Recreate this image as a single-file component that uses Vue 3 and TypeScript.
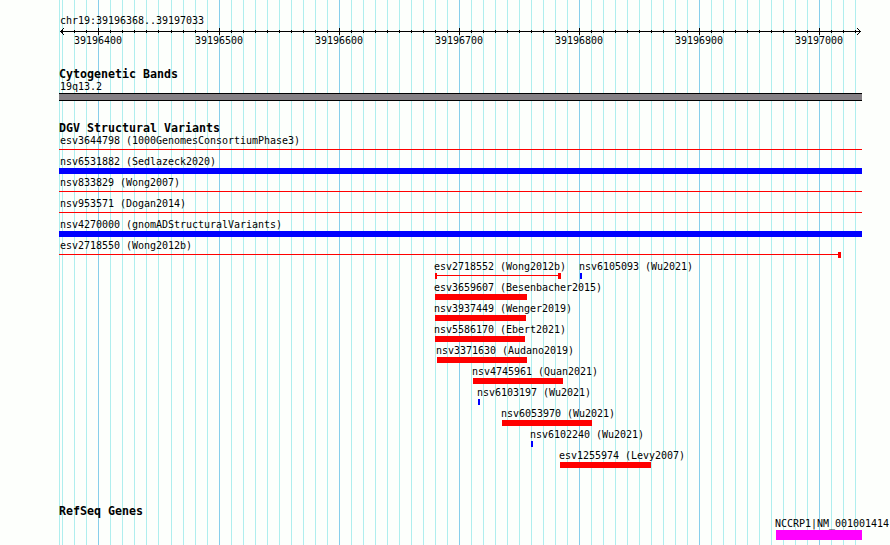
<script setup lang="ts">
interface Feature {
  name: string
  start: number
  end: number
  kind: 'gain' | 'loss' | 'line'
  cap?: number
  startCap?: boolean
  labelAt?: number
}

const viewStart = 59
const viewEnd = 862
const base = 39196400
const toX = (pos: number): number => Math.round(98.435 + (pos - base) * 1.2012)

const gridLines = Array.from({ length: 67 }, (_, i) => 39196370 + i * 10).map((pos) => ({
  pos,
  x: toX(pos) + 0.5,
  major: pos % 100 === 0,
}))
const majors = gridLines.filter((g) => g.major)

const full = (name: string, kind: Feature['kind']): Feature[] => [
  { name, kind, start: viewStart, end: viewEnd, labelAt: 60 },
]
const loss = (name: string, start: number, end: number): Feature[] => [{ name, kind: 'loss', start, end }]
const gain = (name: string, start: number): Feature[] => [{ name, kind: 'gain', start, end: start + 2 }]

const rows: Feature[][] = [
  full('esv3644798 (1000GenomesConsortiumPhase3)', 'line'),
  full('nsv6531882 (Sedlazeck2020)', 'gain'),
  full('nsv833829 (Wong2007)', 'line'),
  full('nsv953571 (Dogan2014)', 'line'),
  full('nsv4270000 (gnomADStructuralVariants)', 'gain'),
  [{ name: 'esv2718550 (Wong2012b)', kind: 'line', start: viewStart, end: 841, cap: 3, labelAt: 60 }],
  [
    { name: 'esv2718552 (Wong2012b)', kind: 'line', start: 435, end: 561, cap: 3, startCap: true },
    { name: 'nsv6105093 (Wu2021)', kind: 'gain', start: 580, end: 582 },
  ],
  loss('esv3659607 (Besenbacher2015)', 435, 527),
  loss('nsv3937449 (Wenger2019)', 435, 526),
  loss('nsv5586170 (Ebert2021)', 435, 525),
  loss('nsv3371630 (Audano2019)', 437, 527),
  loss('nsv4745961 (Quan2021)', 473, 563),
  gain('nsv6103197 (Wu2021)', 478),
  loss('nsv6053970 (Wu2021)', 502, 592),
  gain('nsv6102240 (Wu2021)', 531),
  loss('esv1255974 (Levy2007)', 560, 651),
]

// Each feature occupies zero layout width, so its margin is the gap to the previous feature's start.
const offset = (row: Feature[], i: number): string =>
  `${row[i].start - (i === 0 ? viewStart : row[i - 1].start)}px`
const labelShift = (f: Feature): string => `${(f.labelAt ?? f.start - 1) - f.start}px`
</script>

<template>
  <main class="browser">
    <svg class="grid" width="890" height="545" shape-rendering="crispEdges" aria-hidden="true">
      <line class="minor" x1="59.5" x2="59.5" y1="0" y2="545" />
      <line
        v-for="g in gridLines"
        :key="g.pos"
        :class="g.major ? 'major' : 'minor'"
        :x1="g.x"
        :x2="g.x"
        y1="0"
        y2="545"
      />
    </svg>

    <section class="ruler">
      <div class="label">chr19:39196368..39197033</div>
      <svg class="axis" width="803" height="8" viewBox="59 27 803 8" shape-rendering="crispEdges">
        <path class="stroke" d="M60 31.5H861" />
        <path
          v-for="g in gridLines"
          :key="g.pos"
          class="stroke"
          :d="g.major ? `M${g.x} 28V35` : `M${g.x} 30V33`"
        />
        <path
          class="head"
          d="M60 31h1v1h-1zM61 30h1v1h-1zM61 32h1v1h-1zM62 29h1v1h-1zM62 33h1v1h-1zM63 28h1v1h-1zM63 34h1v1h-1z"
        />
        <path
          class="head"
          d="M860 31h1v1h-1zM859 30h1v1h-1zM859 32h1v1h-1zM858 29h1v1h-1zM858 33h1v1h-1zM857 28h1v1h-1zM857 34h1v1h-1z"
        />
      </svg>
      <div class="ticks">
        <span v-for="(g, i) in majors" :key="g.pos" class="tick" :style="{ marginLeft: `${g.x - 0.5 - (i ? majors[i - 1].x - 0.5 : viewStart)}px` }">
          <span class="tick-text">{{ g.pos }}</span>
        </span>
      </div>
    </section>

    <section class="bands">
      <h2>Cytogenetic Bands</h2>
      <div class="label">19q13.2</div>
      <div class="band"></div>
    </section>

    <section class="variants">
      <h2>DGV Structural Variants</h2>
      <div v-for="(row, r) in rows" :key="r" class="row">
        <div v-for="(f, i) in row" :key="f.name" class="feature" :style="{ marginLeft: offset(row, i) }">
          <div class="label" :style="{ marginLeft: labelShift(f) }">{{ f.name }}</div>
          <div :class="['glyph', f.kind]" :style="{ width: `${f.end - f.start}px` }">
            <i v-if="f.startCap" class="cap first"></i>
            <i v-if="f.cap" class="cap last"></i>
          </div>
        </div>
      </div>
    </section>

    <section class="genes">
      <h2>RefSeq Genes</h2>
      <div class="gene">
        <div class="label">NCCRP1|NM_001001414</div>
        <div class="gene-bar"></div>
      </div>
    </section>
  </main>
</template>

<style>
body {
  background: #fdfffc;
}
</style>

<style scoped>
.browser {
  position: relative;
  box-sizing: border-box;
  width: 890px;
  height: 545px;
  padding: 15px 0 0 59px;
  overflow: hidden;
  background: #fdfffc;
  color: #000;
  font-family: "DejaVu Sans Mono", "Liberation Mono", monospace;
  font-size: 10px;
  line-height: 12px;
  letter-spacing: -0.02px;
}
.grid {
  position: absolute;
  left: 0;
  top: 0;
}
.minor {
  stroke: #afeeee;
}
.major {
  stroke: #87ceeb;
}
section {
  position: relative;
}
.label {
  white-space: pre;
  height: 12px;
}
.ruler {
  height: 53px;
}
.ruler > .label,
.bands > .label {
  margin-left: 1px;
}
.axis {
  display: block;
}
.stroke {
  fill: none;
  stroke: #000;
}
.head {
  fill: #000;
}
.ticks {
  display: flex;
}
.tick {
  display: flex;
  justify-content: center;
  width: 0;
}
.tick-text {
  flex: none;
}
h2 {
  margin: 0;
  height: 13px;
  font-size: 11.63px;
  line-height: 13px;
  font-weight: 700;
  letter-spacing: 0;
}
.bands {
  height: 54px;
}
.band {
  box-sizing: border-box;
  width: 803px;
  height: 8px;
  border: solid #000;
  border-width: 1px 0;
  background: #848084;
}
.row {
  display: flex;
  height: 21px;
}
.feature {
  flex: none;
  width: 0;
}
.glyph {
  display: flex;
  justify-content: space-between;
  height: 6px;
}
.gain {
  background: #00f;
}
.loss {
  background: #f00;
}
.line {
  background: linear-gradient(#f00, #f00) 0 2px / 100% 1px no-repeat;
}
.cap {
  width: 3px;
  height: 6px;
  background: #f00;
}
.first {
  width: 2px;
}
.last {
  margin-left: auto;
}
.genes {
  padding-top: 34px;
}
.gene {
  margin-left: 717px;
}
.gene .label {
  margin-left: -1px;
}
.gene-bar {
  width: 86px;
  height: 10px;
  background: #f0f;
}
</style>
